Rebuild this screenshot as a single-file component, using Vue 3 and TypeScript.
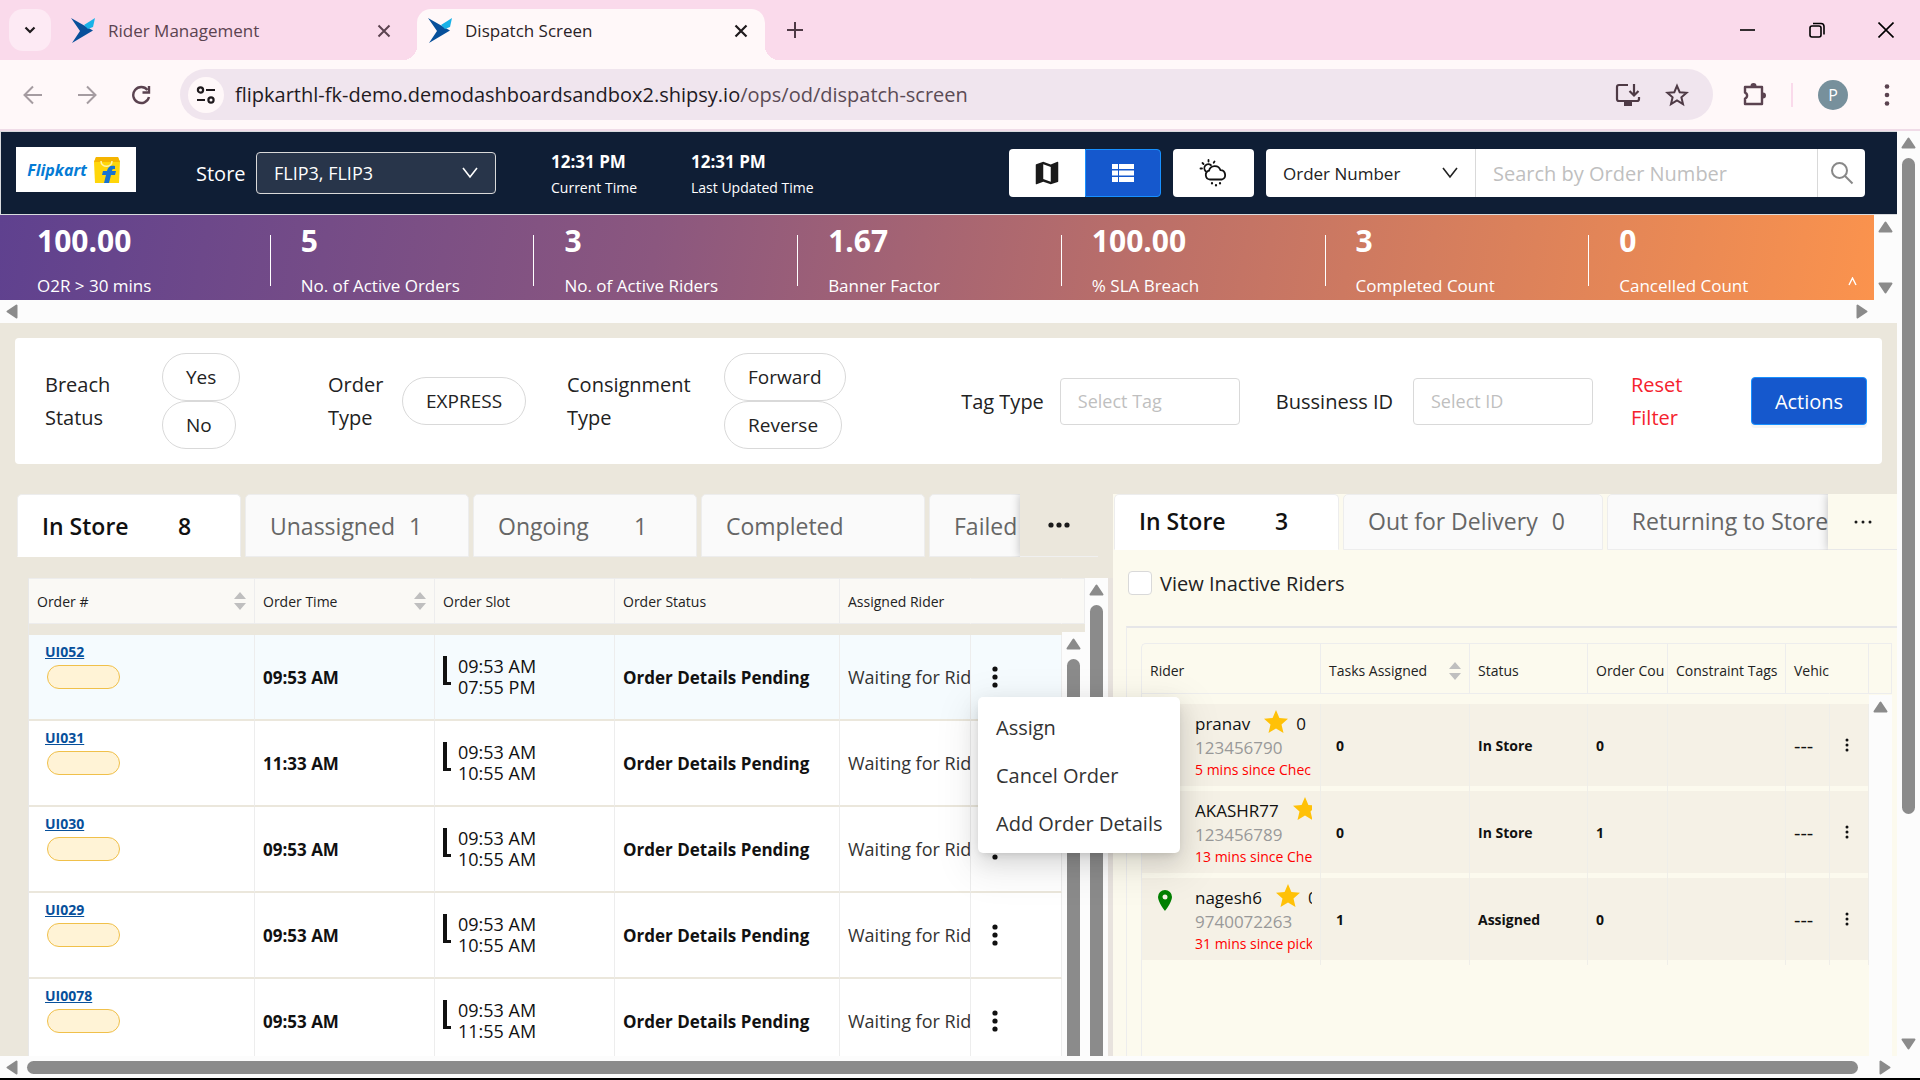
<script setup lang="ts">
import { ref } from 'vue'

interface Metric { value: string; label: string }
interface Tab { label: string; count: string }
interface Order { id: string; time: string; from: string; to: string; status: string; rider: string }
interface Rider { name: string; phone: string; note: string; tasks: number; status: string; orders: number; pinned: boolean }

const metrics: Metric[] = [
  { value: '100.00', label: 'O2R > 30 mins' },
  { value: '5', label: 'No. of Active Orders' },
  { value: '3', label: 'No. of Active Riders' },
  { value: '1.67', label: 'Banner Factor' },
  { value: '100.00', label: '% SLA Breach' },
  { value: '3', label: 'Completed Count' },
  { value: '0', label: 'Cancelled Count' },
]

const orderTabs: Tab[] = [
  { label: 'In Store', count: '8' },
  { label: 'Unassigned', count: '1' },
  { label: 'Ongoing', count: '1' },
  { label: 'Completed', count: '' },
  { label: 'Failed', count: '' },
]

const riderTabs: Tab[] = [
  { label: 'In Store', count: '3' },
  { label: 'Out for Delivery', count: '0' },
  { label: 'Returning to Store', count: '' },
]

const pending = 'Order Details Pending'
const waiting = 'Waiting for Rid'
const orders: Order[] = [
  { id: 'UI052', time: '09:53 AM', from: '09:53 AM', to: '07:55 PM', status: pending, rider: waiting },
  { id: 'UI031', time: '11:33 AM', from: '09:53 AM', to: '10:55 AM', status: pending, rider: waiting },
  { id: 'UI030', time: '09:53 AM', from: '09:53 AM', to: '10:55 AM', status: pending, rider: waiting },
  { id: 'UI029', time: '09:53 AM', from: '09:53 AM', to: '10:55 AM', status: pending, rider: waiting },
  { id: 'UI0078', time: '09:53 AM', from: '09:53 AM', to: '11:55 AM', status: pending, rider: waiting },
]

const riders: Rider[] = [
  { name: 'pranav', phone: '123456790', note: '5 mins since Chec', tasks: 0, status: 'In Store', orders: 0, pinned: false },
  { name: 'AKASHR77', phone: '123456789', note: '13 mins since Che', tasks: 0, status: 'In Store', orders: 1, pinned: false },
  { name: 'nagesh6', phone: '9740072263', note: '31 mins since pick', tasks: 1, status: 'Assigned', orders: 0, pinned: true },
]

const menuItems = ['Assign', 'Cancel Order', 'Add Order Details']
const activeOrderTab = ref(0)
const activeRiderTab = ref(0)
const hoveredOrder = ref('UI052')
const showInactive = ref(false)
const search = ref('')
const tag = ref('')
const businessId = ref('')
</script>

<template>
  <div class="window">
    <div class="tabstrip">
      <button class="tab-search" aria-label="Search tabs">
        <svg width="14" height="14" viewBox="0 0 14 14"><path d="M2.500 4.500L7 9l4.500-4.500" fill="none" stroke="#1f1a1d" stroke-width="2.200" /></svg>
      </button>
      <div class="btab">
        <svg class="fav" width="26" height="25" viewBox="0 0 26 25"><path d="M0 0l22 12.500L1 25l8-12z" fill="#07509b" /><path d="M24 0l-2 9-5 2-4-4z" fill="#19b2e8" /></svg>
        <span class="btab-title">Rider Management</span>
        <button class="x" aria-label="Close tab"><svg width="14" height="14" viewBox="0 0 14 14"><path d="M1.500 1.500l11 11M12.500 1.500l-11 11" stroke="#5b4350" stroke-width="2" /></svg></button>
      </div>
      <div class="btab current">
        <svg class="fav" width="26" height="25" viewBox="0 0 26 25"><path d="M0 0l22 12.500L1 25l8-12z" fill="#07509b" /><path d="M24 0l-2 9-5 2-4-4z" fill="#19b2e8" /></svg>
        <span class="btab-title">Dispatch Screen</span>
        <button class="x" aria-label="Close tab"><svg width="14" height="14" viewBox="0 0 14 14"><path d="M1.500 1.500l11 11M12.500 1.500l-11 11" stroke="#1f1a1d" stroke-width="2.200" /></svg></button>
      </div>
      <button class="new-tab" aria-label="New tab"><svg width="18" height="18" viewBox="0 0 18 18"><path d="M9 1v16M1 9h16" stroke="#4e3a45" stroke-width="2" /></svg></button>
      <div class="win-controls">
        <button aria-label="Minimize"><svg width="16" height="16" viewBox="0 0 16 16"><path d="M0 8h15" stroke="#000" stroke-width="1.600" /></svg></button>
        <button aria-label="Restore"><svg width="16" height="16" viewBox="0 0 16 16" fill="none" stroke="#000" stroke-width="1.600"><rect x="1" y="4" width="11" height="11" rx="2" /><path d="M4 1.500h8a3 3 0 0 1 3 3v8" /></svg></button>
        <button aria-label="Close"><svg width="16" height="16" viewBox="0 0 16 16"><path d="M.5.5l15 15M15.500.5l-15 15" stroke="#000" stroke-width="1.600" /></svg></button>
      </div>
    </div>

    <div class="toolbar">
      <div class="nav-buttons">
        <button aria-label="Back"><svg width="20" height="20" viewBox="0 0 20 20" fill="none" stroke="#a59ca1" stroke-width="2"><path d="M19 10H2M10 1.500L1.500 10l8.500 8.500" /></svg></button>
        <button aria-label="Forward"><svg width="20" height="20" viewBox="0 0 20 20" fill="none" stroke="#a59ca1" stroke-width="2"><path d="M1 10h17M10 1.500l8.500 8.500-8.500 8.500" /></svg></button>
        <button aria-label="Reload"><svg width="20" height="20" viewBox="0 0 20 20" fill="none" stroke="#5b4350" stroke-width="2.400"><path d="M16.500 5A8 8 0 1 0 18 12" /><path d="M18 1v6.500h-6.500" /></svg></button>
      </div>
      <div class="omnibox">
        <button class="site-info" aria-label="Site information">
          <svg width="20" height="18" viewBox="0 0 20 18" fill="none" stroke="#1f1a1d" stroke-width="2.200"><circle cx="4.500" cy="4" r="2.600" /><path d="M10 4h9M1 14h8" /><circle cx="15" cy="14" r="2.600" /></svg>
        </button>
        <div class="url">flipkarthl-fk-demo.demodashboardsandbox2.shipsy.io<span>/ops/od/dispatch-screen</span></div>
        <button aria-label="Install app"><svg width="26" height="24" viewBox="0 0 26 24" fill="none" stroke="#4e3a45" stroke-width="2.200"><path d="M13 2H4a2 2 0 0 0-2 2v12a2 2 0 0 0 2 2h18a2 2 0 0 0 2-2v-2" /><path d="M19 1v11M14.500 8l4.500 4.500L23.500 8" /><path d="M9 21h8" stroke-width="4" /></svg></button>
        <button aria-label="Bookmark"><svg width="24" height="24" viewBox="0 0 24 24" fill="none" stroke="#4e3a45" stroke-width="2"><path d="M12 2.800l2.700 6.400 6.900.6-5.200 4.500 1.600 6.800-6-3.600-6 3.600 1.600-6.800-5.200-4.500 6.900-.6z" /></svg></button>
      </div>
      <div class="tools">
        <button aria-label="Extensions"><svg width="27" height="27" viewBox="0 0 27 27"><path d="M4 6h17v17H4v-5.500a3.200 3.200 0 0 0 0-6z" fill="none" stroke="#5b4350" stroke-width="2.400" stroke-linejoin="round" /><path d="M9.500 5a3 3 0 0 1 6 0zM22 11.500a3 3 0 0 1 0 6z" fill="#5b4350" /></svg></button>
        <i class="tool-divider"></i>
        <span class="avatar">P</span>
        <button aria-label="Menu"><svg width="6" height="24" viewBox="0 0 6 24" fill="#5b4350"><circle cx="3" cy="3.500" r="2.300" /><circle cx="3" cy="12" r="2.300" /><circle cx="3" cy="20.500" r="2.300" /></svg></button>
      </div>
    </div>

    <div class="viewport">
      <div class="page">
        <header class="topbar">
          <div class="logo">
            <span>Flipkart</span>
            <svg width="28" height="28" viewBox="0 0 28 28"><path d="M3 1h22l2 5-1 21H2L1 6z" fill="#ffd60a" /><path d="M1 6l2-5h22l2 5z" fill="#f5b400" /><path d="M8 5c0 7 11 7 11 0" fill="none" stroke="#fff3a8" stroke-width="1.600" /><path d="M22 10c-5-1-7 1-8 5h-4l-1 4h4l-2 8h5l2-8h4l1-4h-4c0-2 1-2 3-2z" fill="#1673d1" /></svg>
          </div>
          <label class="store-label" for="store">Store</label>
          <div class="select store">
            <select id="store"><option>FLIP3, FLIP3</option></select>
            <svg width="16" height="12" viewBox="0 0 16 12"><path d="M1 1l7 9 7-9" fill="none" stroke="#fff" stroke-width="1.600" /></svg>
          </div>
          <div class="clock"><b>12:31 PM</b><span>Current Time</span></div>
          <div class="clock"><b>12:31 PM</b><span>Last Updated Time</span></div>
          <div class="top-actions">
            <div class="toggle">
              <button aria-label="Map view"><svg width="30" height="30" viewBox="0 0 24 24" fill="#1a1a1a"><path d="M20.500 3l-.16.03L15 5.100 9 3 3.360 4.900c-.21.07-.36.25-.36.48V20.500c0 .28.22.5.5.5l.16-.03L9 18.900l6 2.100 5.640-1.900c.21-.07.36-.25.36-.48V3.500c0-.28-.22-.5-.5-.5zM15 19l-6-2.110V5l6 2.110V19z" /></svg></button>
              <button class="on" aria-label="List view"><svg width="22" height="18" viewBox="0 0 22 18" fill="#fff"><path d="M0 0h6v5H0zM7 0h15v5H7zM0 6.500h6v5H0zM7 6.500h15v5H7zM0 13h6v5H0zM7 13h15v5H7z" /></svg></button>
            </div>
            <button class="weather" aria-label="Weather">
              <svg width="30" height="28" viewBox="0 0 30 28" fill="none" stroke="#111" stroke-width="1.800" stroke-linecap="round"><path d="M11 20.500a4.500 4.500 0 0 1-1-8.800 6 6 0 0 1 11.500-.5 4.800 4.800 0 0 1 1.500 9.300z" /><path d="M6.500 12a4 4 0 0 1 5.500-5.800M9.500 1v1.500M3.500 4l1 1M1.500 9.500H3M15.500 2.500l-.8 1.200" /><path d="M13 24v.5M21 24v.5M17 26v.5" stroke-width="2.200" /></svg>
            </button>
            <div class="search">
              <div class="select kind">
                <select aria-label="Search by"><option>Order Number</option></select>
                <svg width="16" height="12" viewBox="0 0 16 12"><path d="M1 1l7 9 7-9" fill="none" stroke="#222" stroke-width="1.600" /></svg>
              </div>
              <input v-model="search" type="text" aria-label="Search by Order Number" placeholder="Search by Order Number">
              <button aria-label="Search"><svg width="24" height="24" viewBox="0 0 24 24" fill="none" stroke="#888" stroke-width="2"><circle cx="9.500" cy="9.500" r="7.500" /><path d="M15 15l7.500 7.500" /></svg></button>
            </div>
          </div>
        </header>

        <section class="banner-row">
          <div class="banner">
            <div v-for="m in metrics" :key="m.label" class="metric">
              <strong>{{ m.value }}</strong><span>{{ m.label }}</span>
            </div>
            <button class="collapse" aria-label="Collapse banner"><svg width="9" height="9" viewBox="0 0 9 9"><path d="M1 8l3.500-7L8 8" fill="none" stroke="#fff" stroke-width="1.400" /></svg></button>
          </div>
          <div class="sb-v">
            <svg class="arr" viewBox="0 0 23 24"><path d="M11.500 7.500l6 9h-12z" /></svg>
            <svg class="arr end" viewBox="0 0 23 24"><path d="M11.500 16.500l6-9h-12z" /></svg>
          </div>
        </section>
        <div class="sb-h banner-scroll">
          <svg class="arr" viewBox="0 0 24 23"><path d="M7.500 11.500l9-6v12z" /></svg>
          <svg class="arr end" viewBox="0 0 24 23"><path d="M16.500 11.500l-9-6v12z" /></svg>
        </div>

        <section class="filters">
          <div class="group breach">
            <span class="lbl">Breach Status</span>
            <div class="pills"><button>Yes</button><button>No</button></div>
          </div>
          <div class="group otype">
            <span class="lbl">Order Type</span>
            <div class="pills"><button>EXPRESS</button></div>
          </div>
          <div class="group ctype">
            <span class="lbl">Consignment Type</span>
            <div class="pills"><button>Forward</button><button>Reverse</button></div>
          </div>
          <div class="fields">
            <label for="tag">Tag Type</label>
            <input id="tag" v-model="tag" type="text" placeholder="Select Tag">
            <label for="bid" class="bid">Bussiness ID</label>
            <input id="bid" v-model="businessId" type="text" placeholder="Select ID">
            <a href="#" class="reset">Reset Filter</a>
            <button class="primary">Actions</button>
          </div>
        </section>

        <main class="work">
          <section class="orders">
            <div class="tabs">
              <div class="tab-list">
                <button v-for="(t, i) in orderTabs" :key="t.label" :class="{ active: i === activeOrderTab }" @click="activeOrderTab = i">
                  <span>{{ t.label }}</span><em>{{ t.count }}</em>
                </button>
              </div>
              <button class="more" aria-label="More tabs"><svg width="22" height="6" viewBox="0 0 22 6" fill="#1a1a1a"><circle cx="3" cy="3" r="2.600" /><circle cx="11" cy="3" r="2.600" /><circle cx="19" cy="3" r="2.600" /></svg></button>
            </div>
            <div class="order-area">
              <div class="order-scroll">
                <table>
                  <colgroup><col class="c-id"><col class="c-time"><col class="c-time"><col class="c-status"><col><col class="c-menu"><col class="c-gutter"></colgroup>
                  <thead>
                    <tr>
                      <th><div class="sortable">Order #<svg width="12" height="18" viewBox="0 0 12 18"><path d="M6 0l6 7H0zM6 18l6-7H0z" fill="#bfbfbf" /></svg></div></th>
                      <th><div class="sortable">Order Time<svg width="12" height="18" viewBox="0 0 12 18"><path d="M6 0l6 7H0zM6 18l6-7H0z" fill="#bfbfbf" /></svg></div></th>
                      <th>Order Slot</th><th>Order Status</th><th class="open">Assigned Rider</th><th class="open"></th><th></th>
                    </tr>
                  </thead>
                  <tbody>
                    <tr v-for="o in orders" :key="o.id" :class="{ hover: o.id === hoveredOrder }" @mouseenter="hoveredOrder = o.id">
                      <td class="id"><a href="#">{{ o.id }}</a><i class="badge"></i></td>
                      <td class="strong">{{ o.time }}</td>
                      <td><div class="slot"><i></i><div><div>{{ o.from }}</div><div>{{ o.to }}</div></div></div></td>
                      <td class="strong">{{ o.status }}</td>
                      <td class="rider">{{ o.rider }}</td>
                      <td class="act"><button aria-label="Order actions"><svg width="6" height="22" viewBox="0 0 6 22" fill="#111"><circle cx="3" cy="3" r="2.600" /><circle cx="3" cy="11" r="2.600" /><circle cx="3" cy="19" r="2.600" /></svg></button></td>
                      <td class="gutter"></td>
                    </tr>
                  </tbody>
                </table>
                <div class="sb-v inner">
                  <svg class="arr" viewBox="0 0 23 24"><path d="M11.500 7.500l6 9h-12z" /></svg>
                  <i class="thumb"></i>
                </div>
              </div>
              <div class="sb-v outer">
                <svg class="arr" viewBox="0 0 23 24"><path d="M11.500 7.500l6 9h-12z" /></svg>
                <i class="thumb"></i>
              </div>
            </div>
            <div class="menu" role="menu">
              <button v-for="m in menuItems" :key="m" role="menuitem">{{ m }}</button>
            </div>
          </section>

          <section class="riders">
            <div class="tabs">
              <div class="tab-list">
                <button v-for="(t, i) in riderTabs" :key="t.label" :class="{ active: i === activeRiderTab }" @click="activeRiderTab = i">
                  <span>{{ t.label }}</span><em>{{ t.count }}</em>
                </button>
              </div>
              <button class="more" aria-label="More tabs"><svg width="18" height="4" viewBox="0 0 18 4" fill="#1a1a1a"><circle cx="2" cy="2" r="1.500" /><circle cx="9" cy="2" r="1.500" /><circle cx="16" cy="2" r="1.500" /></svg></button>
            </div>
            <label class="inactive"><input v-model="showInactive" type="checkbox">View Inactive Riders</label>
            <div class="rider-frame">
              <div class="rider-scroll">
                <table>
                  <colgroup><col class="r-name"><col class="r-tasks"><col class="r-status"><col class="r-count"><col><col class="r-veh"><col class="r-act"><col class="c-gutter"></colgroup>
                  <thead>
                    <tr>
                      <th>Rider</th>
                      <th><div class="sortable">Tasks Assigned<svg width="12" height="18" viewBox="0 0 12 18"><path d="M6 0l6 7H0zM6 18l6-7H0z" fill="#bfbfbf" /></svg></div></th>
                      <th>Status</th><th>Order Cou</th><th>Constraint Tags</th><th class="open">Vehic</th><th></th><th></th>
                    </tr>
                  </thead>
                  <tbody>
                    <tr v-for="r in riders" :key="r.name">
                      <td class="who">
                        <div class="who-row">
                          <span class="pin"><svg v-if="r.pinned" width="14" height="21" viewBox="0 0 14 21"><path d="M7 0a7 7 0 0 0-7 7c0 5 7 14 7 14s7-9 7-14a7 7 0 0 0-7-7zm0 4.500a2.500 2.500 0 1 1 0 5 2.500 2.500 0 0 1 0-5z" fill="#008000" /></svg></span>
                          <div class="who-text">
                            <div class="name">{{ r.name }}<svg width="24" height="23" viewBox="0 0 24 23"><path d="M12 0l3.400 8 8.600.7-6.500 5.700 2 8.600-7.500-4.600L4.500 23l2-8.600L0 8.700 8.600 8z" fill="#ffc107" /></svg>0</div>
                            <div class="phone">{{ r.phone }}</div>
                            <div class="note">{{ r.note }}</div>
                          </div>
                        </div>
                      </td>
                      <td class="tasks">{{ r.tasks }}</td><td>{{ r.status }}</td><td>{{ r.orders }}</td><td></td><td class="none">---</td>
                      <td class="act"><button aria-label="Rider actions"><svg width="4" height="14" viewBox="0 0 4 14" fill="#111"><circle cx="2" cy="2" r="1.500" /><circle cx="2" cy="7" r="1.500" /><circle cx="2" cy="12" r="1.500" /></svg></button></td>
                      <td class="gutter"></td>
                    </tr>
                  </tbody>
                </table>
                <div class="sb-v inner">
                  <svg class="arr" viewBox="0 0 23 24"><path d="M11.500 7.500l6 9h-12z" /></svg>
                </div>
              </div>
            </div>
          </section>
        </main>
      </div>
      <div class="sb-v page-scroll">
        <svg class="arr" viewBox="0 0 23 24"><path d="M11.500 7.500l6 9h-12z" /></svg>
        <div class="track"><i class="thumb"></i></div>
        <svg class="arr" viewBox="0 0 23 24"><path d="M11.500 16.500l6-9h-12z" /></svg>
      </div>
    </div>
    <div class="sb-h page-scroll-h">
      <svg class="arr" viewBox="0 0 24 23"><path d="M7.500 11.500l9-6v12z" /></svg>
      <i class="thumb"></i>
      <svg class="arr" viewBox="0 0 24 23"><path d="M16.500 11.500l-9-6v12z" /></svg>
    </div>
  </div>
</template>

<style>
body { background: #000; overflow: hidden; }
</style>

<style scoped>
* { box-sizing: border-box; }
.window { height: 100vh; display: flex; flex-direction: column; overflow: hidden; padding-bottom: 2px; font-family: "Open Sans", "Noto Sans", sans-serif; font-size: 20px; color: #222; }
button { font: inherit; color: inherit; border: 0; background: none; padding: 0; margin: 0; display: flex; align-items: center; justify-content: center; flex: none; }
input, select { font: inherit; margin: 0; outline: 0; }
svg { display: block; flex: none; }
em { font-style: normal; }

.tabstrip { height: 60px; flex: none; background: #fadaeb; display: flex; align-items: flex-end; padding-left: 9px; }
.tab-search { width: 42px; height: 42px; border-radius: 14px; background: #fdeaf4; margin-bottom: 9px; }
.btab { width: 348px; height: 51px; display: flex; align-items: center; padding: 0 17px 8px 11px; font-size: 17px; color: #5b4350; margin-left: 9px; }
.fav { margin-right: 11px; }
.btab-title { flex: 1; }
.btab.current { background: #fff8f9; color: #2a2226; border-radius: 14px 14px 0 0; position: relative; }
.btab.current::before, .btab.current::after { content: ""; position: absolute; bottom: 0; width: 14px; height: 14px; }
.btab.current::before { left: -14px; background: radial-gradient(circle at 0 0, transparent 14px, #fff8f9 14px); }
.btab.current::after { right: -14px; background: radial-gradient(circle at 100% 0, transparent 14px, #fff8f9 14px); }
.new-tab { margin: 0 0 21px 21px; }
.win-controls { margin-left: auto; display: flex; align-self: stretch; }
.win-controls button { width: 69px; }

.toolbar { height: 71px; flex: none; background: #fff8f9; border-bottom: 2px solid #f0dce8; display: flex; align-items: center; }
.nav-buttons { display: flex; gap: 34px; padding-left: 23px; width: 180px; }
.omnibox { flex: 1; height: 51px; border-radius: 26px; background: #f0e5ee; display: flex; align-items: center; gap: 24px; padding: 0 24px 0 8px; }
.site-info { width: 36px; height: 36px; border-radius: 50%; background: #fff8f9; }
.url { flex: 1; margin-left: -13px; color: #221a1f; white-space: nowrap; }
.url span { color: #5b4b55; }
.tools { width: 207px; padding-left: 28px; display: flex; align-items: center; }
.tool-divider { width: 2px; height: 24px; background: #fadaeb; margin-left: 23px; }
.avatar { width: 30px; height: 30px; border-radius: 50%; background: #77909c; color: #fff; font-size: 16px; line-height: 30px; text-align: center; margin: 0 36px 0 25px; }

.viewport { flex: 1; min-height: 0; display: flex; background: #fff; }
.page { flex: 1; min-width: 0; display: flex; flex-direction: column; background: #ebe7dc; overflow: hidden; }
.topbar { height: 84px; flex: none; background: #0f1e35; border: 1px solid #d9dbde; border-right: 0; display: flex; align-items: center; color: #fff; padding: 0 32px 0 15px; }
.logo { width: 120px; height: 45px; background: #fff; display: flex; align-items: center; justify-content: center; gap: 6px; color: #047bd5; font-size: 16px; font-weight: 700; font-style: italic; padding-right: 4px; margin-bottom: 7px; }
.store-label { margin-left: 60px; width: 60px; }
.select { position: relative; }
.select select { appearance: none; width: 100%; height: 100%; background: transparent; border: 0; padding: 0 17px; color: inherit; }
.select svg { position: absolute; right: 17px; top: 50%; margin-top: -6px; pointer-events: none; }
.store { width: 240px; height: 42px; background: #28354a; border: 1px solid #d9d9d9; border-radius: 4px; font-size: 18px; }
.clock { display: flex; flex-direction: column; margin-left: 55px; width: 85px; white-space: nowrap; font-size: 14px; line-height: 26px; padding-top: 3px; }
.clock b { font-size: 17px; font-weight: 700; }
.top-actions { margin-left: auto; display: flex; gap: 12px; height: 48px; }
.toggle { display: flex; }
.toggle button { width: 76px; height: 48px; background: #fff; border-radius: 4px 0 0 4px; }
.toggle .on { background: #1558cd; border: 1px solid #1890ff; border-radius: 0 4px 4px 0; }
.weather { width: 81px; background: #fff; border-radius: 4px; }
.search { display: flex; background: #fff; border-radius: 4px; color: #222; }
.kind { width: 210px; font-size: 17px; border-right: 1px solid #d9d9d9; }
.search input { width: 341px; border: 0; padding: 0 17px; background: none; }
.search button { width: 48px; border-left: 1px solid #d9d9d9; }
::placeholder { color: #bfbfbf; opacity: 1; }

.banner-row { display: flex; height: 85px; flex: none; }
.banner { flex: 1; position: relative; display: grid; grid-template-columns: repeat(7, 1fr); padding: 0 22px 0 6px; background: linear-gradient(100deg, #5f418f, #8b577f 35%, #bd7068 62%, #fb934d); color: #fff; }
.metric { position: relative; padding: 5px 0 0 31px; display: flex; flex-direction: column; font-size: 17px; line-height: 28px; }
.metric strong { font-size: 30px; line-height: 42px; }
.metric span { padding-top: 10px; white-space: nowrap; }
.metric:not(:first-child)::before { content: ""; position: absolute; left: 0; top: 20px; bottom: 14px; width: 1px; background: #fff; }
.collapse { position: absolute; right: 17px; bottom: 14px; }
.sb-v { width: 23px; flex: none; background: #fcfcfc; display: flex; flex-direction: column; align-items: center; }
.sb-v .arr { width: 23px; height: 24px; }
.sb-h { display: flex; align-items: center; background: #fcfcfc; flex: none; height: 23px; }
.sb-h .arr { width: 24px; height: 23px; }
.arr path { fill: #8b8b8b; stroke: #8b8b8b; stroke-width: 2; stroke-linejoin: round; }
.arr.end { margin-top: auto; }
.sb-h .arr.end { margin: 0 0 0 auto; }
.banner-scroll { padding-right: 23px; }
.thumb { background: #8b8b8b; border-radius: 7px; display: block; }
.sb-v > .thumb { width: 13px; flex: 1; margin-top: 3px; border-radius: 7px 7px 0 0; }
.page-scroll .track { flex: 1; padding-top: 3px; }
.page-scroll .thumb { width: 13px; height: 75%; }
.page-scroll-h { height: 22px; padding-right: 23px; }
.page-scroll-h .thumb { flex: 1; height: 13px; margin: 0 15px 0 3px; }

.filters { margin: 15px 15px 30px; height: 126px; flex: none; background: #fff; border-radius: 4px; display: flex; align-items: center; padding: 0 15px 0 30px; line-height: 33px; }
.group { display: flex; align-items: center; }
.breach { width: 283px; }
.breach .lbl { width: 117px; padding-right: 40px; }
.otype { width: 239px; }
.otype .lbl { width: 74px; padding-right: 10px; }
.ctype .lbl { width: 157px; padding-right: 24px; }
.pills { display: flex; flex-direction: column; align-items: flex-start; }
.pills button { height: 48px; border: 1px solid #d9d9d9; border-radius: 24px; padding: 0 23px; background: #fff; font-size: 19px; }
.fields { margin-left: auto; display: flex; align-items: center; white-space: nowrap; }
.fields input { width: 180px; height: 47px; border: 1px solid #d9d9d9; border-radius: 4px; padding: 0 17px; margin-left: 16px; font-size: 18px; }
.bid { margin-left: 36px; }
.fields .bid + input { margin-left: 20px; }
.reset { width: 120px; padding-right: 60px; margin-left: 38px; color: #f5222d; text-decoration: none; white-space: normal; }
.primary { width: 116px; height: 48px; background: #1558cd; border: 1px solid #1890ff; border-radius: 4px; color: #fff; box-shadow: 0 3px 0 rgba(0, 0, 0, .04); }

.work { flex: 1; min-height: 0; display: grid; grid-template-columns: 1113fr 784fr; grid-template-rows: minmax(0, 1fr); }
.orders { position: relative; display: flex; flex-direction: column; min-width: 0; }
.tabs { display: flex; flex: none; }
.tab-list { flex: 1; display: flex; gap: 4px; overflow: hidden; position: relative; }
.tab-list::after { content: ""; position: absolute; right: -10px; top: 0; width: 10px; height: 100%; box-shadow: 0 0 10px rgba(0, 0, 0, .25); }
.tab-list button { min-width: 224px; height: 63px; justify-content: flex-start; padding: 0 24px; background: #fafafa; border: 1px solid #ededed; border-radius: 5px 5px 0 0; color: #666; font-size: 23px; white-space: nowrap; }
.tab-list span { min-width: 122px; margin-right: 14px; text-align: left; }
.tab-list .active { background: #fff; border-bottom-color: #fff; color: #111; font-weight: 600; }
.orders .tabs { padding: 0 15px 0 17px; }
.orders .more { width: 78px; border-bottom: 1px solid #f0f0f0; }
.riders .tab-list button { height: 56px; min-width: 225px; padding: 0 37px 2px 24px; }
.riders .more { width: 69px; border-bottom: 1px solid #e8e8e8; }
.order-area { flex: 1; min-height: 0; display: flex; margin: 21px 0 0 28px; border-right: 5px solid #e8e3de; }
.order-scroll { flex: 1; min-width: 0; position: relative; overflow: hidden; border-left: 1px solid #e8e8e8; }
table { width: 100%; table-layout: fixed; border-collapse: separate; border-spacing: 0; }
th, td { padding: 0 8px; text-align: left; overflow: hidden; white-space: nowrap; }
th { height: 46px; font-size: 14px; font-weight: 500; background: #faf9f5; border: solid #ededed; border-width: 1px 1px 1px 0; color: #222; }
th.open { border-right-color: transparent; }
.sortable { display: flex; justify-content: space-between; align-items: center; }
tbody::before { content: ""; display: table-row; height: 11px; }
.order-scroll tbody td { height: 86px; background: #fff; border-right: 1px solid #ededed; border-bottom: 2px solid #ebe7dc; font-size: 17px; }
.order-scroll tbody tr.hover td { background: #f5fbfe; }
.order-scroll tbody td.strong { font-weight: 700; color: #111; }
.order-scroll tbody td.id { vertical-align: top; padding: 8px 16px; line-height: 18px; }
.id a { color: #07509b; font-size: 14px; font-weight: 700; text-decoration: underline; display: block; }
.badge { display: block; width: 73px; height: 24px; margin: 4px 2px; border: 1px solid #f0c04a; border-radius: 12px; background: #fff3d6; }
.slot { display: flex; line-height: 21px; font-size: 18px; color: #111; }
.slot i { width: 8px; height: 29px; border: solid #111; border-width: 0 0 3px 4px; margin-right: 7px; }
.order-scroll tbody td.rider { padding-right: 0; color: #333; font-size: 18px; }
.order-scroll .act { padding-left: 21px; }
.c-id { width: 226px; } .c-time { width: 180px; } .c-status { width: 225px; } .c-menu { width: 91px; } .c-gutter { width: 23px; }
.sb-v.inner { position: absolute; right: 0; top: 54px; bottom: 0; }
.menu { position: absolute; top: 203px; right: -67px; z-index: 5; width: 202px; padding: 6px 0; background: #fff; border-radius: 5px; box-shadow: 0 4px 8px -4px rgba(0, 0, 0, .16), 0 8px 22px rgba(0, 0, 0, .11), 0 12px 38px 10px rgba(0, 0, 0, .07); }
.menu button { width: 100%; height: 48px; justify-content: flex-start; padding-left: 18px; color: #333; white-space: nowrap; }

.riders { background: #fcfaee; display: flex; flex-direction: column; min-width: 0; }
.riders .tabs { padding-left: 1px; }
.inactive { display: flex; align-items: center; gap: 8px; padding-left: 15px; height: 66px; margin-bottom: 10px; flex: none; }
.inactive input { appearance: none; width: 24px; height: 24px; border: 1px solid #d9d9d9; border-radius: 4px; background: #fff; }
.rider-frame { flex: 1; min-height: 0; margin-left: 13px; border-top: 2px solid #e6e6e8; border-left: 1px solid #ededed; padding: 15px 5px 0 14px; }
.rider-scroll { height: 100%; position: relative; overflow: hidden; border: solid #ededed; border-width: 1px 0 0 1px; border-radius: 5px 0 0 0; }
.riders th { background: none; height: 50px; border-top: 0; padding-top: 4px; }
.riders tbody::before { height: 10px; }
.riders tbody td { height: 87px; background: #f5f1e6; border: solid #efeee9; border-width: 0 1px 0 0; box-shadow: inset 0 -5px #fcfaee; padding-bottom: 5px; font-size: 14px; font-weight: 700; color: #111; }
.riders tbody td.gutter { background: none; }
.riders td.tasks { padding-left: 15px; }
.riders tbody td.none { font-size: 20px; font-weight: 500; }
.who-row { display: flex; font-weight: 500; }
.pin { width: 45px; padding: 8px 0 0 8px; flex: none; }
.who-text { flex: 1; overflow: hidden; padding-top: 2px; }
.name { display: flex; align-items: center; font-size: 17px; line-height: 24px; }
.name svg { margin: 0 8px 6px 14px; }
.phone { font-size: 17px; line-height: 18px; color: #999; font-weight: 400; }
.note { font-size: 14px; line-height: 26px; color: #f00; font-weight: 400; }
.riders .act { padding-left: 15px; }
.riders .sb-v.inner { top: 51px; }
.r-name { width: 179px; } .r-tasks { width: 149px; } .r-status { width: 118px; } .r-count { width: 80px; } .r-veh { width: 44px; } .r-act { width: 39px; }
</style>
